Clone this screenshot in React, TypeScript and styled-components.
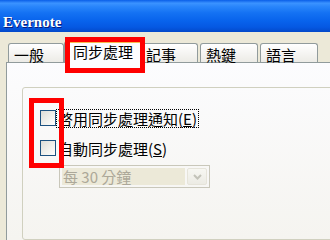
import React from "react";
import styled, { createGlobalStyle } from "styled-components";

const GlobalStyle = createGlobalStyle`
  html, body {
    margin: 0;
    padding: 0;
    overflow: hidden;
    background: #ece9d8;
  }
`;

const CJK = `"Noto Sans CJK TC", "Noto Sans", sans-serif`;

const Window = styled.div`
  width: 330px;
  height: 240px;
  overflow: hidden;
  background: #ece9d8;
  font-family: ${CJK};
`;

const TitleBar = styled.div`
  height: 32px;
  box-sizing: border-box;
  padding: 8px 0 0 3px;
  background: linear-gradient(
    180deg,
    #0a5ee8 0%,
    #3b93ff 10%,
    #2a86fb 20%,
    #1472f3 40%,
    #0863ec 65%,
    #0558e2 85%,
    #0449c9 100%
  );
`;

const Title = styled.span`
  font-family: "Liberation Serif", serif;
  font-weight: 700;
  font-size: 15px;
  line-height: 17px;
  color: #fff;
  text-shadow: 1px 1px 0 #0a1b7a;
`;

const TabRow = styled.div`
  display: flex;
  align-items: flex-end;
  gap: 2px;
  padding: 9px 0 0 8px;
  position: relative;
  z-index: 2;
`;

const Tab = styled.div<{ $active?: boolean; $w: number }>`
  position: relative;
  box-sizing: border-box;
  width: ${(p) => p.$w}px;
  height: ${(p) => (p.$active ? 22 : 19)}px;
  margin: ${(p) => (p.$active ? "0 -4px -1px -2px" : "0")};
  padding: ${(p) => (p.$active ? "1px 0 0 8px" : "3px 0 0 5px")};
  border: 1px solid #919b9c;
  border-top: ${(p) => (p.$active ? "2px solid #f5bc4f" : "1px solid #919b9c")};
  border-bottom: none;
  border-radius: 3px 3px 0 0;
  background: ${(p) =>
    p.$active ? "#fcfcfe" : "linear-gradient(180deg, #ffffff, #ecebe6)"};
  z-index: ${(p) => (p.$active ? 3 : 1)};
  font-size: 15px;
  line-height: 15px;
  color: #000;
  white-space: nowrap;
`;

const Highlight = styled.div<{ $l: number; $t: number; $w: number; $h: number }>`
  position: absolute;
  left: ${(p) => p.$l}px;
  top: ${(p) => p.$t}px;
  width: ${(p) => p.$w}px;
  height: ${(p) => p.$h}px;
  box-sizing: border-box;
  border: 5px solid #ff0000;
  pointer-events: none;
  z-index: 5;
`;

const Panel = styled.div`
  position: relative;
  margin-left: 6px;
  height: 200px;
  box-sizing: border-box;
  border-top: 1px solid #919b9c;
  border-left: 1px solid #919b9c;
  background: linear-gradient(180deg, #fcfcfe 0%, #f4f3ee 100%);
  padding: 24px 0 0 15px;
  z-index: 1;
`;

const GroupBox = styled.div`
  position: relative;
  box-sizing: border-box;
  width: 340px;
  height: 153px;
  border: 1px solid #d0d0bf;
  border-radius: 3px;
  padding: 22px 0 0 17px;
  display: flex;
  flex-direction: column;
  gap: 14px;
`;

const CheckRow = styled.div`
  display: flex;
  align-items: center;
  gap: 1px;
  height: 16px;
`;

const Box = styled.span`
  width: 16px;
  height: 16px;
  box-sizing: border-box;
  border: 1px solid #1c5180;
  background: linear-gradient(135deg, #dcdcd7 0%, #f0f0ec 55%, #ffffff 100%);
  flex: none;
`;

const Label = styled.span<{ $focus?: boolean }>`
  font-size: 15px;
  line-height: 17px;
  padding: 0 1px;
  color: #000;
  white-space: nowrap;
  outline: ${(p) => (p.$focus ? "1px dotted #000" : "none")};
  outline-offset: 0;

  u {
    text-decoration: underline;
    text-underline-offset: 1px;
  }
`;

const Select = styled.div`
  margin: -5px 0 0 19px;
  width: 151px;
  height: 23px;
  box-sizing: border-box;
  border: 1px solid #c9c7ba;
  padding: 2px;
  display: flex;
  gap: 2px;
`;

const SelectValue = styled.div`
  flex: 1;
  background: #ece9d8;
  color: #aca899;
  font-size: 15px;
  line-height: 17px;
  padding: 0 0 0 1px;
  white-space: pre;
`;

const SelectButton = styled.div`
  width: 20px;
  box-sizing: border-box;
  border: 1px solid #e6e4da;
  border-radius: 2px;
  background: linear-gradient(180deg, #f7f7f2, #ecebe4);
  display: flex;
  align-items: center;
  justify-content: center;
`;

const tabs = [
  { name: "一般", w: 56 },
  { name: "同步處理", w: 78, active: true },
  { name: "記事", w: 58 },
  { name: "熱鍵", w: 58 },
  { name: "語言", w: 58 },
];

export default function App() {
  return (
    <Window>
      <GlobalStyle />
      <TitleBar>
        <Title>Evernote</Title>
      </TitleBar>
      <TabRow>
        {tabs.map((t) => (
          <Tab key={t.name} $w={t.w} $active={t.active}>
            {t.name}
            {t.active && <Highlight $l={0} $t={-6} $w={80} $h={36} />}
          </Tab>
        ))}
      </TabRow>
      <Panel>
        <GroupBox>
          <Highlight $l={6} $t={10} $w={35} $h={70} />
          <CheckRow>
            <Box />
            <Label $focus>
              啓用同步處理通知(<u>E</u>)
            </Label>
          </CheckRow>
          <CheckRow>
            <Box />
            <Label>
              自動同步處理(<u>S</u>)
            </Label>
          </CheckRow>
          <Select>
            <SelectValue>每 30 分鐘</SelectValue>
            <SelectButton>
              <svg width="9" height="6" viewBox="0 0 9 6">
                <path
                  d="M1 1 L4.5 4.5 L8 1"
                  fill="none"
                  stroke="#c3c3b9"
                  strokeWidth="2"
                />
              </svg>
            </SelectButton>
          </Select>
        </GroupBox>
      </Panel>
    </Window>
  );
}
